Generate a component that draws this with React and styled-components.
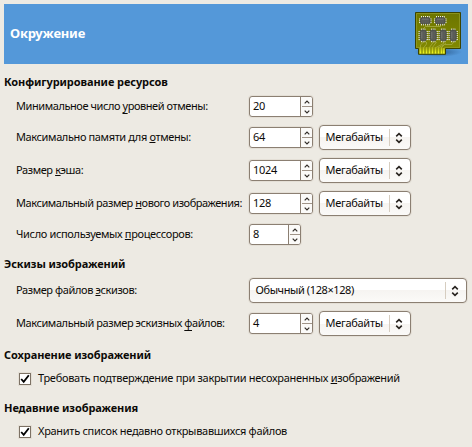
import React from "react";
import styled, { createGlobalStyle } from "styled-components";

const Global = createGlobalStyle`
  * { box-sizing: border-box; }
  body { margin: 0; background: #edeae3; overflow: hidden; }
`;

const Page = styled.main`
  width: 472px;
  height: 447px;
  padding: 4px 4px 0;
  background: #edeae3;
  color: #0c0a08;
  font: 11px/20px "Noto Sans", "Open Sans", sans-serif;
  white-space: nowrap;
`;

const Header = styled.header`
  display: flex;
  align-items: center;
  justify-content: space-between;
  height: 60px;
  margin-bottom: 8px;
  padding: 0 6px;
  background: #5498d9;
`;

const Title = styled.h1`
  margin: 0;
  padding-bottom: 2px;
  color: #fff;
  font-size: 13px;
  font-weight: 700;
  letter-spacing: -0.2px;
`;

const Section = styled.section`
  margin-bottom: 9px;
`;

const Heading = styled.h2`
  height: 20px;
  margin: 0 0 4px;
  font-size: 11px;
  line-height: 20px;
  font-weight: 700;
  letter-spacing: -0.09px;
`;

const Rows = styled.div`
  display: flex;
  flex-direction: column;
  gap: 8px;
`;

const Row = styled.div`
  display: grid;
  grid-template-columns: 233px auto auto;
  justify-content: start;
  align-items: center;
  padding-left: 12px;
`;

const Label = styled.label`
  padding-bottom: 2px;
  line-height: 18px;
  letter-spacing: ${(p) => p.$spacing}px;
`;

const Key = styled.span`
  text-decoration: underline;
  text-decoration-thickness: 1px;
  text-underline-offset: ${(p) => (p.$low ? 3 : 1)}px;
  text-decoration-skip-ink: none;
`;

const SpinBox = styled.div`
  display: flex;
  width: ${(p) => p.$width}px;
  height: 21px;
  border: 1px solid #8b7f72;
  border-radius: 3px;
  background: #fff;
  box-shadow: 0 0 0 1px #e4dfd6;
  overflow: hidden;
`;

const SpinValue = styled.span`
  flex: 1;
  padding-left: 3px;
  line-height: 18px;
  letter-spacing: -0.3px;
`;

const SpinButtons = styled.span`
  display: grid;
  grid-template-rows: 9px 10px;
  width: 12px;
  padding-left: 1px;
  border-left: 1px solid #8b7f72;
  background: #fbfaf8;
`;

const SpinButton = styled.span`
  display: grid;
  place-items: center;
  & + & { border-top: 1px solid #a09488; }
`;

const ComboBox = styled.div`
  display: flex;
  align-items: center;
  width: ${(p) => p.$width}px;
  height: 25px;
  margin-left: ${(p) => p.$gap}px;
  padding-left: 5.5px;
  border: 1px solid #8b7f72;
  border-radius: 4px;
  background: linear-gradient(#fff 0 50%, #f6f4f1 50%, #fbfaf8 100%);
  box-shadow: 0 0 0 1px #e4dfd6;
`;

const ComboText = styled.span`
  flex: 1;
  padding-bottom: 2px;
  line-height: 18px;
  letter-spacing: ${(p) => p.$spacing}px;
`;

const ComboArrow = styled.span`
  display: grid;
  place-items: center;
  width: 21px;
  height: 17px;
  padding-right: 3px;
  border-left: 1px solid #d6cdc0;
`;

const CheckRow = styled.div`
  display: flex;
  align-items: center;
  gap: 7px;
  height: 20px;
  padding-left: 15px;
`;

const CheckBox = styled.span`
  display: grid;
  place-items: center;
  width: 12px;
  height: 12px;
  border: 1px solid #7d7265;
  background: #fff;
  box-shadow: 0 0 0 1px #e4dfd6;
`;

const Chevron = ({ down }) => (
  <svg width="6" height="4" viewBox="0 0 6 4" fill="none" stroke="#332e29" strokeWidth="1.2">
    <path d={down ? "M.7 .7L3 3L5.3 .7" : "M.7 3.3L3 1L5.3 3.3"} />
  </svg>
);

function Spin({ value, width = 64 }) {
  return (
    <SpinBox $width={width}>
      <SpinValue>{value}</SpinValue>
      <SpinButtons>
        <SpinButton><Chevron /></SpinButton>
        <SpinButton><Chevron down /></SpinButton>
      </SpinButtons>
    </SpinBox>
  );
}

function Combo({ text, width = 92, gap = 6, spacing = -0.3 }) {
  return (
    <ComboBox $width={width} $gap={gap}>
      <ComboText $spacing={spacing}>{text}</ComboText>
      <ComboArrow>
        <svg width="8" height="12" viewBox="0 0 8 12" fill="none" stroke="#28231f" strokeWidth="1.6">
          <path d="M1.2 4.4L4 1.7L6.8 4.4M1.2 7.6L4 10.3L6.8 7.6" />
        </svg>
      </ComboArrow>
    </ComboBox>
  );
}

function KeyLabel({ parts, spacing }) {
  const [before, key, after] = parts;
  return (
    <Label $spacing={spacing}>
      {before}
      {key && <Key $low={"уф".includes(key)}>{key}</Key>}
      {after}
    </Label>
  );
}

function Check({ parts, spacing }) {
  return (
    <CheckRow>
      <CheckBox>
        <svg width="10" height="10" viewBox="0 0 10 10" fill="none" stroke="#000" strokeWidth="1.8">
          <path d="M1.2 5L3.7 7.9L8.8 1.2" />
        </svg>
      </CheckBox>
      <KeyLabel spacing={spacing} parts={parts} />
    </CheckRow>
  );
}

function WideChip({ x, y }) {
  return (
    <g transform={`translate(${x} ${y})`}>
      <path d="M2.5 0V9.4M4.5 0V9.4M6.5 0V9.4M8.5 0V9.4M10.2 0V9.4M0 3H12.6M0 4.8H12.6M0 6.6H12.6" stroke="#eeeee6" strokeWidth="1" />
      <rect x="1.5" y="1.6" width="9.6" height="6.2" rx="1.6" fill="#5a5c58" stroke="#3b3d3a" strokeWidth=".7" />
      <path d="M3 3.2H9.6" stroke="#80827d" strokeWidth=".7" />
    </g>
  );
}

function TallChip({ x, y }) {
  return (
    <g transform={`translate(${x} ${y})`}>
      <path d="M0 3H9.4M0 5H9.4M0 7H9.4M0 9H9.4M0 11H9.4M3 0V13.6M4.7 0V13.6M6.4 0V13.6" stroke="#eeeee6" strokeWidth="1" />
      <rect x="1.6" y="1.4" width="6.2" height="10.8" rx="1.8" fill="#5a5c58" stroke="#3b3d3a" strokeWidth=".7" />
      <path d="M3.3 3.4V10" stroke="#80827d" strokeWidth=".7" />
    </g>
  );
}

function BoardIcon() {
  return (
    <svg width="48" height="48" viewBox="0 0 48 48">
      <defs>
        <linearGradient id="board" x2="0" y2="1">
          <stop stopColor="#6c7500" />
          <stop offset="1" stopColor="#858c00" />
        </linearGradient>
        <linearGradient id="pin" gradientUnits="userSpaceOnUse" x1="0" y1="37" x2="0" y2="43">
          <stop stopColor="#a5a91c" />
          <stop offset="1" stopColor="#f4fa20" />
        </linearGradient>
        <radialGradient id="shade">
          <stop stopColor="#123763" stopOpacity=".6" />
          <stop offset="1" stopColor="#123763" stopOpacity="0" />
        </radialGradient>
      </defs>
      <ellipse cx="24" cy="42" rx="24" ry="5" fill="url(#shade)" />
      <path d="M1.5 2.5H46.5V38.5H31.5V44.3H4.5V38.5H1.5Z" fill="url(#board)" stroke="#3c4300" />
      <path d="M2.5 3.5H45.5V37.5H30.5V43.3H5.5V37.5H2.5Z" fill="none" stroke="#929a24" strokeWidth=".8" />
      <path d="M26.5 14.5V16.5H11.5L9.5 18.5M9.5 32L6.5 35V38M12.5 32V34L9.5 38M19.5 32L15 38M22.5 32L18 38M29.5 32V33.5L21 38M32 33.5L24 38M39.5 32L38 34.5H30.5L27 38" fill="none" stroke="#a2a83c" strokeWidth=".9" />
      <WideChip x="5" y="6" />
      <WideChip x="20" y="6" />
      <TallChip x="4.5" y="18.6" />
      <TallChip x="14.5" y="18.6" />
      <TallChip x="24.5" y="18.6" />
      <TallChip x="34.5" y="18.6" />
      <path d="M6.5 37.1V43.5M9.5 37.1V43.5M12.5 37.1V43.5M15.5 37.1V43.5M18.5 37.1V43.5M21.5 37.1V43.5M24.5 37.1V43.5M27.5 37.1V43.5M29.8 38V43.5" stroke="url(#pin)" strokeWidth="1.7" />
    </svg>
  );
}

export default function App() {
  return (
    <>
      <Global />
      <Page>
        <Header>
          <Title>Окружение</Title>
          <BoardIcon />
        </Header>
        <Section>
          <Heading>Конфигурирование ресурсов</Heading>
          <Rows>
            <Row>
              <KeyLabel spacing={-0.43} parts={["Минимальное число ", "у", "ровней отмены:"]} />
              <Spin value="20" />
            </Row>
            <Row>
              <KeyLabel spacing={-0.38} parts={["Максимально памяти для ", "о", "тмены:"]} />
              <Spin value="64" />
              <Combo text="Мегабайты" />
            </Row>
            <Row>
              <KeyLabel spacing={-0.4} parts={["Размер ", "к", "эша:"]} />
              <Spin value="1024" />
              <Combo text="Мегабайты" />
            </Row>
            <Row>
              <KeyLabel spacing={-0.44} parts={["Максимальный размер ", "н", "ового изображения:"]} />
              <Spin value="128" />
              <Combo text="Мегабайты" />
            </Row>
            <Row>
              <KeyLabel spacing={-0.34} parts={["Число используемых ", "п", "роцессоров:"]} />
              <Spin value="8" width={52} />
            </Row>
          </Rows>
        </Section>
        <Section>
          <Heading>Эскизы изображений</Heading>
          <Rows>
            <Row>
              <KeyLabel spacing={-0.4} parts={["Размер файлов ", "э", "скизов:"]} />
              <Combo text="Обычный (128×128)" width={218} gap={0} spacing={-0.4} />
            </Row>
            <Row>
              <KeyLabel spacing={-0.42} parts={["Максимальный размер эскизных ", "ф", "айлов:"]} />
              <Spin value="4" />
              <Combo text="Мегабайты" />
            </Row>
          </Rows>
        </Section>
        <Section>
          <Heading>Сохранение изображений</Heading>
          <Check spacing={-0.3} parts={["Требовать подтверждение при закрытии несохраненных ", "и", "зображений"]} />
        </Section>
        <Section>
          <Heading>Недавние изображения</Heading>
          <Check spacing={-0.3} parts={["Хранить список недавно открывавшихся файлов"]} />
        </Section>
      </Page>
    </>
  );
}
